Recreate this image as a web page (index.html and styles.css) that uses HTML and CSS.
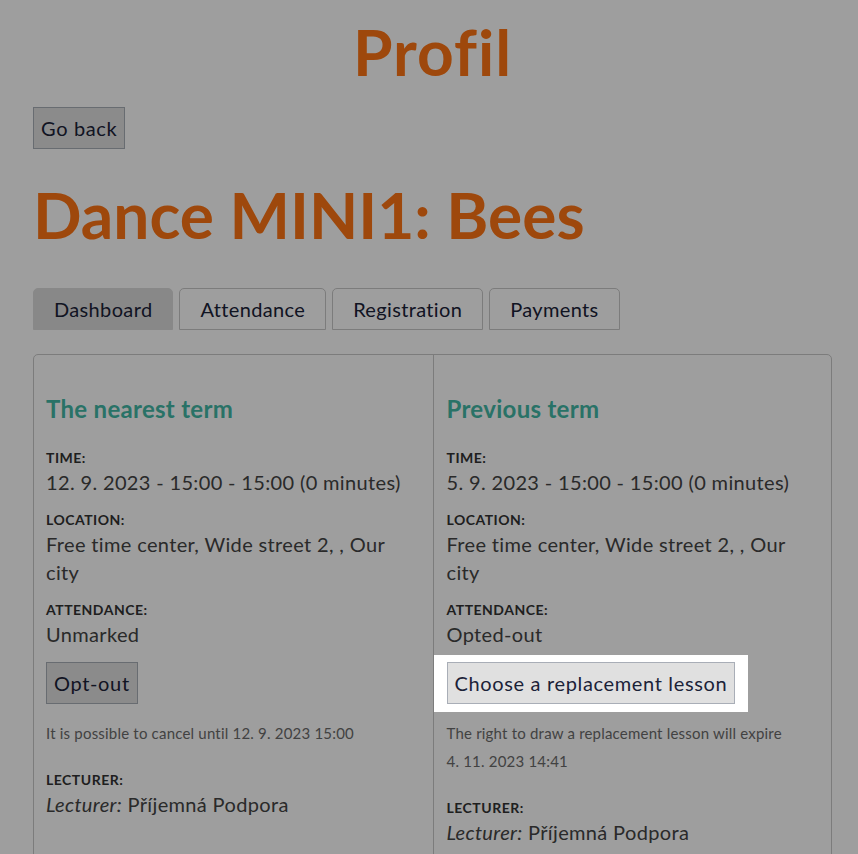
FILE: index.html
```html
<!DOCTYPE html>
<html lang="en">
<head>
    <meta charset="UTF-8">
    <meta name="viewport" content="width=device-width, initial-scale=1.0">
    <title>Profil</title>
    <link rel="stylesheet" href="styles.css">
</head>
<body>
    <main class="page">
        <h1 class="site-title">Profil</h1>
        <button class="btn">Go back</button>

        <h1 class="course-title">Dance MINI1: Bees</h1>

        <nav class="tabs">
            <button class="tab active">Dashboard</button>
            <button class="tab">Attendance</button>
            <button class="tab">Registration</button>
            <button class="tab">Payments</button>
        </nav>

        <section class="card">
            <div class="term">
                <h2>The nearest term</h2>
                <div class="field-label">Time:</div>
                <div class="field-value">12. 9. 2023 - 15:00 - 15:00 (0 minutes)</div>
                <div class="field-label">Location:</div>
                <div class="field-value">Free time center, Wide street 2, , Our city</div>
                <div class="field-label">Attendance:</div>
                <div class="field-value">Unmarked</div>
                <div class="actions">
                    <button class="btn">Opt-out</button>
                </div>
                <p class="note">It is possible to cancel until 12. 9. 2023 15:00</p>
                <div class="field-label">Lecturer:</div>
                <div class="field-value"><em>Lecturer:</em> Příjemná Podpora</div>
            </div>

            <div class="term">
                <h2>Previous term</h2>
                <div class="field-label">Time:</div>
                <div class="field-value">5. 9. 2023 - 15:00 - 15:00 (0 minutes)</div>
                <div class="field-label">Location:</div>
                <div class="field-value">Free time center, Wide street 2, , Our city</div>
                <div class="field-label">Attendance:</div>
                <div class="field-value">Opted-out</div>
                <div class="actions">
                    <span class="tour-highlight">
                        <button class="btn">Choose a replacement lesson</button>
                    </span>
                </div>
                <p class="note">The right to draw a replacement lesson will expire 4.&nbsp;11.&nbsp;2023 14:41</p>
                <div class="field-label">Lecturer:</div>
                <div class="field-value"><em>Lecturer:</em> Příjemná Podpora</div>
            </div>
        </section>
    </main>
</body>
</html>
```

FILE: styles.css
```css
body {
    margin: 0;
    background: #fff;
    color: #444;
    font-family: Lato, "Open Sans", sans-serif;
    font-size: 20px;
    line-height: 28px;
    letter-spacing: 0.35px;
}
.page {
    padding: 0 26px 0 33px;
}
.site-title,
.course-title {
    color: #ff7514;
    font-size: 64px;
    line-height: 76px;
    font-weight: 700;
    letter-spacing: 0;
    margin: 0;
}
.site-title {
    text-align: center;
    margin-top: 14px;
    letter-spacing: 1px;
}
.course-title {
    margin-top: 28px;
}
.btn {
    display: inline-block;
    font-family: inherit;
    font-size: 20px;
    line-height: 28px;
    letter-spacing: 0.65px;
    color: #1b2238;
    background: #e0e0e0;
    border: 1px solid #a9aeb7;
    padding: 6px 7px;
    margin: 17px 0 0;
    cursor: pointer;
}
.actions .btn {
    margin: 0;
}
.tabs {
    display: flex;
    gap: 6px;
    margin-top: 35px;
}
.tab {
    font-family: inherit;
    font-size: 20px;
    line-height: 28px;
    letter-spacing: 0.35px;
    color: #1b2238;
    background: #fff;
    border: 1px solid #c8c8c8;
    border-radius: 5px 5px 0 0;
    padding: 6px 20px;
    cursor: pointer;
}
.tab.active {
    background: #dcdcdc;
    border-color: #dcdcdc;
}
.card {
    display: grid;
    grid-template-columns: 1fr 1fr;
    margin-top: 24px;
    border: 1px solid #c8c8c8;
    border-radius: 5px;
    padding-bottom: 40px;
}
.term {
    padding: 0 13px 0 12px;
}
.term + .term {
    border-left: 1px solid #c8c8c8;
    padding-left: 13px;
}
.term h2 {
    color: #43b9a6;
    font-size: 24px;
    line-height: 28px;
    font-weight: 700;
    letter-spacing: 0.3px;
    margin: 40px 0 25px;
}
.field-label {
    color: #333;
    font-size: 14px;
    line-height: 20px;
    font-weight: 700;
    letter-spacing: 0.5px;
    text-transform: uppercase;
}
.field-value {
    margin-bottom: 14px;
}
.field-value em {
    font-style: italic;
}
.actions {
    margin: 0;
}
.note {
    color: #6b6b6b;
    font-size: 15px;
    line-height: 28px;
    letter-spacing: 0.2px;
    margin: 15px 0 23px;
}
.tour-highlight {
    position: relative;
    z-index: 10;
    display: inline-block;
    margin: -7px 0 -8px -13px;
    padding: 7px 13px 8px;
    background: #fff;
    box-shadow: 0 0 0 9999px rgba(0, 0, 0, 0.38);
}
```
